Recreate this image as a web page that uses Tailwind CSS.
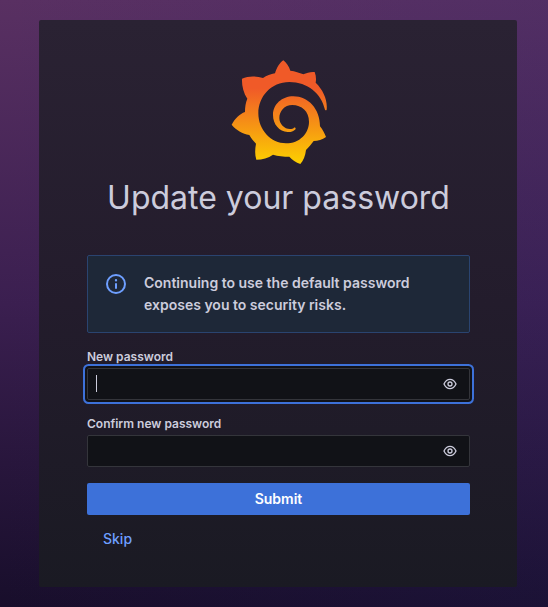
<!DOCTYPE html>
<html lang="en">

    <head>
        <meta charset="UTF-8">
        <meta name="viewport" content="width=device-width, initial-scale=1.0">
        <script src="https://cdn.jsdelivr.net/npm/@tailwindcss/browser@4"></script>
        <title>Update your password</title>
    </head>

    <body class="min-h-screen bg-linear-to-b from-[#593062] via-[#3b1f50] to-[#180e2b] font-['Inter',sans-serif] text-sm text-[#ccccdc]">
        <div class="min-h-screen bg-linear-to-r from-transparent to-[#2c2872]/15 pt-5 pb-5 pl-[39px] pr-[31px]">
            <main class="rounded-xs bg-linear-to-b from-[#2a2233] via-[#231c2c] to-[#1a1a23] pl-12 pr-[47px] pt-10 pb-8">
                <div class="flex flex-col items-center">
                    <svg class="h-[104px] w-24" viewBox="30 30 288 312" aria-hidden="true">
                        <defs>
                            <linearGradient id="flame" x1="0" y1="342" x2="0" y2="115" gradientUnits="userSpaceOnUse">
                                <stop offset="0" stop-color="#fcd000" />
                                <stop offset="1" stop-color="#f05a28" />
                            </linearGradient>
                        </defs>
                        <path fill="url(#flame)" d="M187 31C196 38 204 50 208 62C222 64 235 68 247 73C257 68 269 65 281 66C285 77 286 87 284 98C307 120 320 151 317 179Q315 182 312 179C301 130 260 96 205 96C150 96 112 140 112 190C112 240 150 280 195 280C236 280 264 250 264 215C264 184 242 165 214 165C190 165 175 184 175 204C175 222 190 237 207 237C213 237 216 236 219 233C223 232 226 236 222 239C216 244 208 247 200 246C175 245 156 223 156 195C156 163 183 139 217 139C262 139 297 177 297 229C305 239 311 250 315 261C304 269 291 273 278 273C271 283 263 292 255 300C253 317 247 333 238 342C225 337 213 329 205 320C188 320 171 318 156 314C142 324 124 329 106 329C101 313 102 297 105 281C97 273 90 264 85 255C65 252 45 240 32 224C42 205 56 192 72 186C72 171 74 158 79 146C67 129 62 106 63 86C83 77 106 78 126 84C137 77 149 73 162 70C167 53 176 38 187 31Z" />
                    </svg>
                    <h1 class="mt-3.5 text-[32px] leading-10">Update your password</h1>
                </div>

                <form class="mt-[37px]" onsubmit="return false">
                    <div role="alert" class="flex gap-4 rounded-xs border border-[#2a4470] bg-[#1e2838] px-4 py-4">
                        <svg class="h-6 w-6 shrink-0 text-[#6e9fff]" viewBox="0 0 24 24" fill="currentColor" aria-hidden="true">
                            <path d="M12 2a10 10 0 1 0 0 20 10 10 0 0 0 0-20Zm0 18a8 8 0 1 1 0-16 8 8 0 0 1 0 16Zm0-9a1 1 0 0 0-1 1v4a1 1 0 0 0 2 0v-4a1 1 0 0 0-1-1Zm0-4a1.200 1.200 0 1 0 0 2.400 1.200 1.200 0 0 0 0-2.400Z" />
                        </svg>
                        <p class="font-semibold leading-[22px]">Continuing to use the default password exposes you to security risks.</p>
                    </div>

                    <label for="new-password" class="mt-4 block text-xs font-semibold leading-[15px]">New password</label>
                    <div class="relative mt-1">
                        <input id="new-password" type="password"
                            class="block h-8 w-full rounded-xs border border-[#34353b] bg-[#111217] pl-2 pr-9 caret-transparent outline-none ring-2 ring-[#3d71d9] ring-offset-2 ring-offset-[#111217]">
                        <span class="absolute left-[9px] top-[7px] h-[17px] w-px bg-[#ccccdc]"></span>
                        <button type="button" aria-label="Show password" class="absolute inset-y-0 right-3 flex items-center">
                            <svg class="h-4 w-4" viewBox="0 0 24 24" fill="currentColor">
                                <path d="M21.920 11.600C19.900 6.910 16.100 4 12 4s-7.900 2.910-9.920 7.600a1 1 0 0 0 0 .8C4.100 17.090 7.900 20 12 20s7.900-2.910 9.920-7.600a1 1 0 0 0 0-.8ZM12 18c-3.170 0-6.170-2.290-7.900-6C5.830 8.290 8.830 6 12 6s6.170 2.290 7.900 6c-1.730 3.710-4.730 6-7.900 6Zm0-10a4 4 0 1 0 0 8 4 4 0 0 0 0-8Zm0 6a2 2 0 1 1 0-4 2 2 0 0 1 0 4Z" />
                            </svg>
                        </button>
                    </div>

                    <label for="confirm-password" class="mt-4 block text-xs font-semibold leading-[15px]">Confirm new password</label>
                    <div class="relative mt-1">
                        <input id="confirm-password" type="password"
                            class="block h-8 w-full rounded-xs border border-[#34353b] bg-[#111217] pl-2 pr-9 outline-none">
                        <button type="button" aria-label="Show password" class="absolute inset-y-0 right-3 flex items-center">
                            <svg class="h-4 w-4" viewBox="0 0 24 24" fill="currentColor">
                                <path d="M21.920 11.600C19.900 6.910 16.100 4 12 4s-7.900 2.910-9.920 7.600a1 1 0 0 0 0 .8C4.100 17.090 7.900 20 12 20s7.900-2.910 9.920-7.600a1 1 0 0 0 0-.8ZM12 18c-3.170 0-6.170-2.290-7.900-6C5.830 8.290 8.830 6 12 6s6.170 2.290 7.900 6c-1.730 3.710-4.730 6-7.900 6Zm0-10a4 4 0 1 0 0 8 4 4 0 0 0 0-8Zm0 6a2 2 0 1 1 0-4 2 2 0 0 1 0 4Z" />
                            </svg>
                        </button>
                    </div>

                    <button type="submit" class="mt-4 block h-8 w-full rounded-xs bg-[#3d71d9] font-semibold text-white">Submit</button>
                    <button type="button" class="mt-2 block h-8 px-4 font-medium text-[#6e9fff]">Skip</button>
                </form>
            </main>
        </div>
    </body>

</html>
